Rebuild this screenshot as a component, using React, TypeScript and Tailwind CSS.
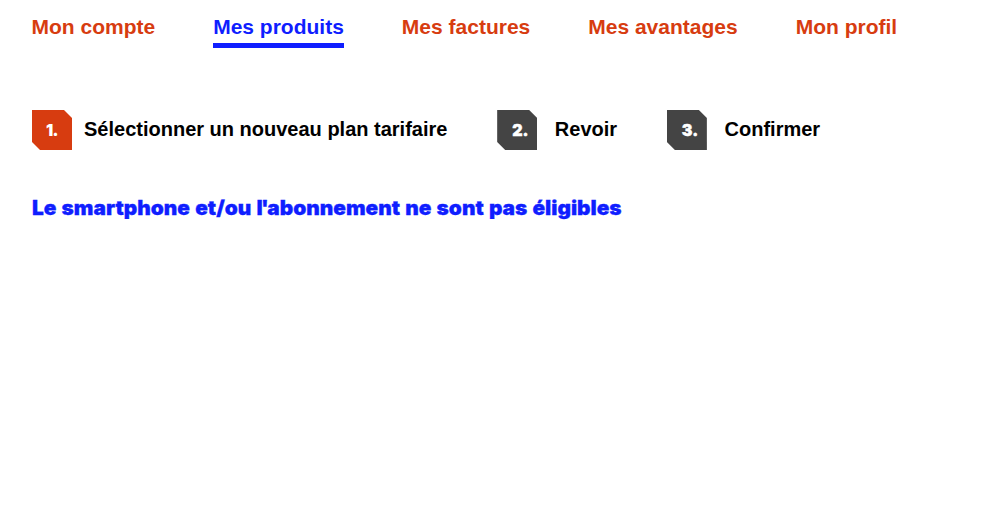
const tabs = [
  { label: "Mon compte", active: false },
  { label: "Mes produits", active: true },
  { label: "Mes factures", active: false },
  { label: "Mes avantages", active: false },
  { label: "Mon profil", active: false },
];

const steps = [
  { label: "Sélectionner un nouveau plan tarifaire", current: true },
  { label: "Revoir", current: false },
  { label: "Confirmer", current: false },
];

export default function App() {
  return (
    <div className="min-h-screen bg-white px-8 font-['Liberation_Sans',Arial,sans-serif] font-bold">
      <nav className="-ml-[0.5px] flex gap-[58px] pt-[11px] text-[21px] leading-[31px] whitespace-nowrap">
        {tabs.map((tab) => (
          <a
            key={tab.label}
            href="#"
            className={`border-b-5 pb-px ${
              tab.active
                ? "border-[#0f1eff] text-[#0f1eff]"
                : "border-transparent text-[#d73c10]"
            }`}
          >
            {tab.label}
          </a>
        ))}
      </nav>

      <ol className="mt-[62px] flex gap-[49.75px] text-xl whitespace-nowrap">
        {steps.map((step, index) => (
          <li
            key={step.label}
            className={`flex h-10 items-center ${step.current ? "gap-3" : "gap-[17.7px]"}`}
          >
            <span
              className={`flex size-10 items-center font-['Inter',sans-serif] text-base font-black text-white [clip-path:polygon(0_0,32px_0,100%_8px,100%_100%,8px_100%,0_32px)] ${
                step.current
                  ? "bg-[#d73c10] pl-[14px] tracking-[-0.8px]"
                  : "bg-[#444] pl-[15px] [-webkit-text-stroke:0.4px_white]"
              }`}
            >
              {index + 1}.
            </span>
            <span className="pb-0.5 leading-[38px]">{step.label}</span>
          </li>
        ))}
      </ol>

      <h1 className="mt-[42px] origin-left scale-x-[1.042] font-['Inter',sans-serif] text-xl leading-8 font-black whitespace-nowrap text-[#0f1eff] [word-spacing:1px] [-webkit-text-stroke:0.3px_#0f1eff]">
        Le smartphone et/ou l<span className="-mx-[1.5px]">'</span>abonnement ne
        sont pas éligibles
      </h1>
    </div>
  );
}
